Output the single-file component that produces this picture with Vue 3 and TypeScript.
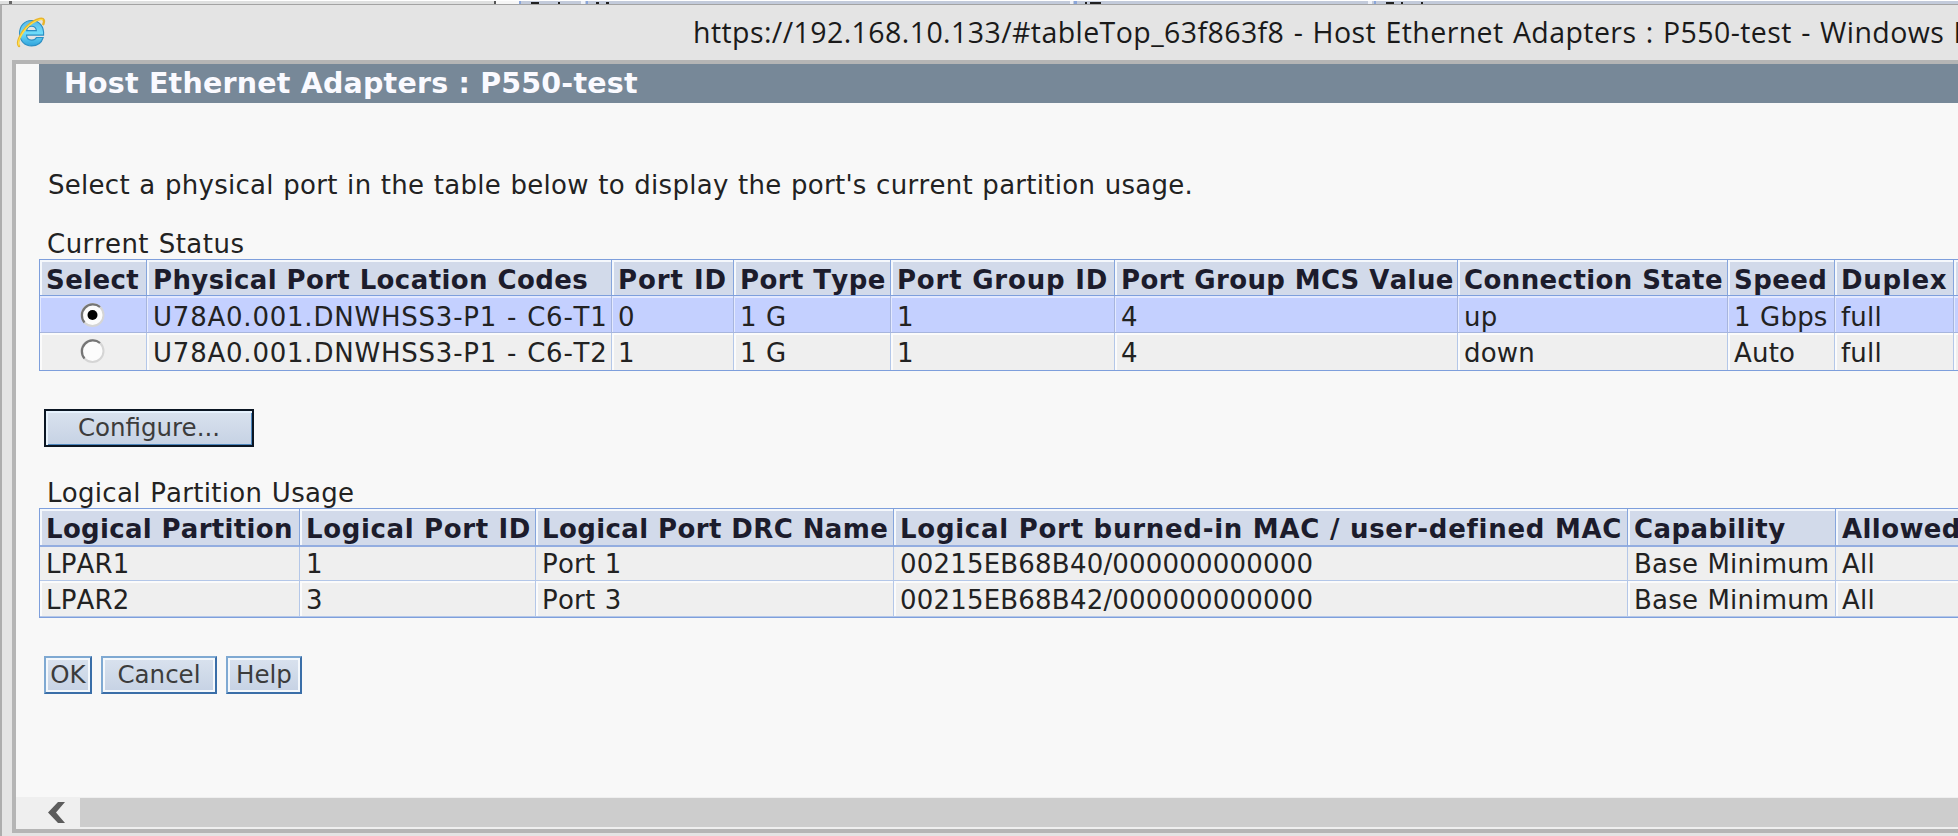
<script setup lang="ts">
import { ref } from 'vue'

interface Port {
  location: string
  values: string[]
}

const portColumns: string[] = [
  'Physical Port Location Codes', 'Port ID', 'Port Type', 'Port Group ID',
  'Port Group MCS Value', 'Connection State', 'Speed', 'Duplex',
]
const ports: Port[] = [
  { location: 'U78A0.001.DNWHSS3-P1 - C6-T1', values: ['0', '1 G', '1', '4', 'up', '1 Gbps', 'full'] },
  { location: 'U78A0.001.DNWHSS3-P1 - C6-T2', values: ['1', '1 G', '1', '4', 'down', 'Auto', 'full'] },
]
const selected = ref(0)

const partitionColumns: string[] = [
  'Logical Partition', 'Logical Port ID', 'Logical Port DRC Name',
  'Logical Port burned-in MAC / user-defined MAC', 'Capability', 'Allowed',
]
const partitions: string[][] = [
  ['LPAR1', '1', 'Port 1', '00215EB68B40/000000000000', 'Base Minimum', 'All'],
  ['LPAR2', '3', 'Port 3', '00215EB68B42/000000000000', 'Base Minimum', 'All'],
]
</script>

<template>
  <div class="screen">
    <svg class="behind" width="1958" height="4" viewBox="0 0 1958 4" shape-rendering="crispEdges">
      <rect width="1958" height="4" fill="#fff" />
      <rect y="1" width="495" height="3" fill="#dfe0e0" />
      <rect x="9" y="1" width="3" height="3" fill="#666" />
      <rect x="494" y="1" width="2" height="3" fill="#555" />
      <rect x="496" y="1" width="23" height="3" fill="#f6f6f6" />
      <rect x="519" y="1" width="1439" height="3" fill="#c3cbdb" />
      <g fill="#8aa6da">
        <rect x="519" y="1" width="2" height="3" />
        <rect x="586" y="1" width="2" height="3" />
        <rect x="1074" y="1" width="3" height="3" />
        <rect x="1374" y="1" width="2" height="3" />
      </g>
      <g fill="#eef1f8">
        <rect x="581" y="1" width="4" height="3" />
        <rect x="1070" y="1" width="3" height="3" />
        <rect x="1368" y="1" width="4" height="3" />
      </g>
      <g fill="#222">
        <rect x="531" y="2" width="8" height="2" />
        <rect x="558" y="2" width="2" height="2" />
        <rect x="596" y="2" width="3" height="2" />
        <rect x="606" y="2" width="3" height="2" />
        <rect x="1085" y="2" width="2" height="2" />
        <rect x="1090" y="2" width="11" height="2" />
        <rect x="1386" y="2" width="8" height="2" />
        <rect x="1401" y="2" width="2" height="2" />
        <rect x="1421" y="2" width="2" height="2" />
      </g>
    </svg>

    <div class="window">
      <header class="titlebar">
        <svg class="ie" width="30" height="32" viewBox="0 0 30 32">
          <defs>
            <linearGradient id="ieBlue" x1="0" y1="0" x2="0" y2="1">
              <stop offset="0" stop-color="#5cb8e6" />
              <stop offset=".5" stop-color="#6fdcfa" />
              <stop offset="1" stop-color="#2fa3dc" />
            </linearGradient>
          </defs>
          <path d="M15.500 3.500C8.500 3.500 3.600 9 3.600 16.300c0 7.300 5 12.600 12 12.600 5.600 0 10-3.200 11.600-8.400h-6.800c-.8 1.700-2.500 2.600-4.600 2.600-3.100 0-5.200-1.900-5.300-5h17.100C28.200 9.500 23.500 3.500 15.500 3.500zM10.600 13.600c.4-2.700 2.300-4.400 5-4.400s4.500 1.700 4.800 4.400z" fill="url(#ieBlue)" stroke="#2b8fc4" stroke-width="1.100" />
          <path d="M3 29C-.5 25 7 11.500 16 5.500 21.500 1.900 26.800.5 27.800 3.200c.4 1.200.1 2.600-.5 4" fill="none" stroke="#e9b42c" stroke-width="2.400" stroke-linecap="round" />
          <path d="M3 28.300C.5 24 8 11.500 16.500 6c4-2.600 8-4 10-3.200" fill="none" stroke="#ffe04a" stroke-width="1.200" stroke-linecap="round" />
        </svg>
        <div class="caption-text">https://192.168.10.133/#tableTop_63f863f8<span class="doc-title"> - Host Ethernet Adapters : P550-test - Windows I</span></div>
      </header>

      <main class="page">
        <h1>Host Ethernet Adapters : P550-test</h1>
        <p class="prompt">Select a physical port in the table below to display the port's current partition usage.</p>

        <div class="label">Current Status</div>
        <table class="grid ports">
          <colgroup>
            <col class="c107"><col class="c465"><col class="c122"><col class="c157"><col class="c224">
            <col class="c343"><col class="c270"><col class="c107"><col class="c119"><col class="c100">
          </colgroup>
          <thead>
            <tr>
              <th>Select</th>
              <th v-for="c in portColumns" :key="c">{{ c }}</th>
              <th></th>
            </tr>
          </thead>
          <tbody>
            <tr v-for="(p, i) in ports" :key="p.location" :class="{ active: selected === i }">
              <td class="pick" @click="selected = i">
                <svg width="26" height="26" viewBox="0 0 26 26">
                  <circle cx="12.500" cy="13" r="11" fill="#fcfcfc" stroke="#d5d5d5" stroke-width="2" />
                  <path d="M4.500 20.500A11 11 0 0 1 20 5" fill="none" stroke="#757575" stroke-width="2.200" />
                  <circle v-if="selected === i" cx="12.500" cy="13" r="5" fill="#000" />
                </svg>
              </td>
              <td class="location">{{ p.location }}</td>
              <td v-for="(v, k) in p.values" :key="k">{{ v }}</td>
              <td></td>
            </tr>
          </tbody>
        </table>

        <div class="actions">
          <button class="default">Configure...</button>
        </div>

        <div class="label second">Logical Partition Usage</div>
        <table class="grid partitions">
          <colgroup>
            <col class="c260"><col class="c236"><col class="c358"><col class="c734"><col class="c208"><col class="c300">
          </colgroup>
          <thead>
            <tr><th v-for="c in partitionColumns" :key="c">{{ c }}</th></tr>
          </thead>
          <tbody>
            <tr v-for="row in partitions" :key="row[0]">
              <td v-for="(v, k) in row" :key="k">{{ v }}</td>
            </tr>
          </tbody>
        </table>

        <div class="actions">
          <button class="ok">OK</button>
          <button class="cancel">Cancel</button>
          <button class="help">Help</button>
        </div>

        <div class="scrollbar">
          <svg width="64" height="31" viewBox="0 0 64 31">
            <path d="M42 5h7l-9 10.500 9 10.500h-7L32 15.500z" fill="#5c5c5c" />
          </svg>
          <div class="thumb"></div>
        </div>
      </main>
    </div>
  </div>
</template>

<style>
body { margin: 0; overflow: hidden; }
</style>

<style scoped>
.screen {
  width: 1958px; height: 836px; overflow: hidden;
  font-family: "DejaVu Sans", Verdana, sans-serif; font-kerning: none;
  font-size: 26px; color: #222; letter-spacing: .2px; word-spacing: .9px;
}
.behind { display: block; }
.window {
  box-sizing: border-box; height: 832px;
  border-top: 1px solid #a3a3a3; border-left: 2px solid #adadad;
  background: #e4e4e4; padding-left: 10px;
}
.titlebar { height: 55px; display: flex; align-items: flex-start; }
.ie { flex: none; margin: 12px 0 0 4px; }
.caption-text {
  margin-left: 647px; white-space: nowrap; line-height: 40px; margin-top: 7px;
  font-family: "Open Sans", "Noto Sans", sans-serif; font-size: 28.500px; color: #1a1a1a;
  letter-spacing: .42px; word-spacing: 1.200px;
}
.doc-title { letter-spacing: .42px; word-spacing: 1.500px; }
.page {
  box-sizing: border-box; height: 773px; width: 1950px;
  border: solid #b5b5b5; border-width: 4px; border-right: 0;
  background: #f8f8f8;
  display: flex; flex-direction: column; overflow: hidden;
}
h1 {
  flex: none; margin: 0 0 0 23px; padding-left: 25px; height: 39px; line-height: 40px;
  background: #778898; color: #fafaff; font-size: 28.500px; font-weight: bold; white-space: nowrap;
  letter-spacing: .2px; word-spacing: 0;
}
.prompt { flex: none; margin: 62px 0 0 32px; height: 40px; line-height: 40px; white-space: nowrap; letter-spacing: .28px; }
.label { flex: none; height: 35px; line-height: 40px; margin: 19px 0 0 31px; white-space: nowrap; letter-spacing: .48px; }
.label.second { margin-top: 26px; letter-spacing: .3px; }
.grid {
  flex: none; align-self: flex-start; margin-left: 23px;
  table-layout: fixed; border-collapse: separate; border-spacing: 0;
  border-top: 1px solid #7e9fdc; border-left: 1px solid #7e9fdc; border-bottom: 1px solid #7e9fdc;
}
.ports { width: 2015px; }
.partitions { width: 2097px; }
th, td {
  box-sizing: border-box; padding: 5px 0 0 6px; text-align: left; vertical-align: top;
  white-space: nowrap; overflow: hidden; height: 37px; line-height: 30px;
}
th {
  background: #d2daea; color: #1c1c2c; border-right: 1px solid #86a5dc; border-bottom: 1px solid #7e9fdc;
  box-shadow: inset 2px 2px #f5f8fc; letter-spacing: .4px; word-spacing: 0; height: 36px;
}
.ports th:nth-child(3) { letter-spacing: .95px; }
.ports th:nth-child(5) { letter-spacing: .8px; }
.ports th:nth-child(9) { letter-spacing: .7px; }
.partitions th:nth-child(1) { letter-spacing: .32px; }
.partitions th:nth-child(2) { letter-spacing: .65px; }
.partitions th:nth-child(4) { letter-spacing: .73px; }
td {
  background: #efefef; border-right: 1px solid #b4c7e8; border-bottom: 1px solid #b4c7e8;
  box-shadow: inset 2px 2px #fbfbfb;
}
.location { letter-spacing: .78px; }
.active td { background: #c4d0ff; border-color: #a7b5dd; box-shadow: inset 1px 2px #e3e9ff; padding-top: 6px; }
tbody tr:last-child td { border-bottom: 0; }
.partitions th { height: 38px; border-bottom: 2px solid #93ade0; }
.partitions tbody tr:first-child td { height: 34px; padding-top: 2px; box-shadow: none; }
.partitions tbody tr:last-child td { height: 36px; padding-top: 4px; border-bottom: 1px solid #b4c7e8; }
td.pick { padding-left: 0; }
.pick svg { display: block; margin: 0 auto; }
.c107 { width: 107px; } .c465 { width: 465px; } .c122 { width: 122px; } .c157 { width: 157px; }
.c224 { width: 224px; } .c343 { width: 343px; } .c270 { width: 270px; }
.c119 { width: 119px; } .c100 { width: 100px; } .c260 { width: 260px; } .c236 { width: 236px; }
.c358 { width: 358px; } .c734 { width: 734px; } .c208 { width: 208px; } .c300 { width: 300px; }
.actions { flex: none; display: flex; gap: 9px; margin: 38px 0 0 28px; height: 38px; }
button {
  box-sizing: border-box; height: 38px; padding: 0; line-height: 28px;
  font-family: inherit; font-size: 24.500px; color: #3c3c3c; white-space: nowrap;
  border: 2px solid; border-color: #7fa9d2 #3a6ea8 #3a6ea8 #7fa9d2; border-radius: 0;
  background: linear-gradient(#d9e2ee, #c6d2e4); box-shadow: inset 0 0 0 2px #f4f8fc;
}
.default { width: 210px; border-color: #0b1623; box-shadow: inset 2px 2px #e6f2fd, inset -1px -1px #4d86bd; }
.ok { width: 48px; } .cancel { width: 116px; } .help { width: 76px; }
.scrollbar { flex: none; margin-top: auto; height: 32px; display: flex; background: #efefef; }
.thumb { flex: 1; margin: 1px 0 2px; background: #cdcdcd; }
</style>
